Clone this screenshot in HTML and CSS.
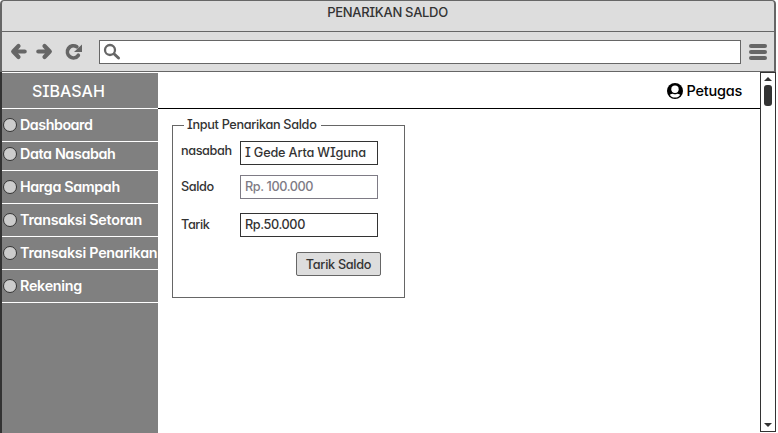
FILE: index.html
```html
<!DOCTYPE html>
<html lang="id">
<head>
<meta charset="utf-8">
<title>Penarikan Saldo</title>
<link rel="stylesheet" href="styles.css">
</head>
<body>
<div class="window">
  <header class="titlebar"><span class="title">PENARIKAN SALDO</span></header>
  <div class="toolbar">
    <svg class="nav-icons" width="97" height="40" viewBox="0 0 97 40" fill="none" stroke="#666" stroke-width="4.2" stroke-linecap="round" stroke-linejoin="round">
      <path d="M16.500 14L11.200 19.500L16.500 25M12 19.500H22.700"/>
      <path d="M42.500 14L47.800 19.500L42.500 25M36.300 19.500H47"/>
      <path d="M76.300 23.300A6 6 0 1 1 74.800 14.800" stroke-width="3.700"/>
      <path d="M80 12.500V20H72Z" fill="#666" stroke="none"/>
    </svg>
    <div class="address">
      <svg width="20" height="20" viewBox="0 0 20 20" fill="none" stroke="#666">
        <circle cx="7" cy="7" r="5" stroke-width="2.300"/>
        <path d="M11.200 11L15.500 15" stroke-width="3" stroke-linecap="round"/>
      </svg>
    </div>
    <div class="menu-icon"><i></i><i></i><i></i></div>
  </div>
  <div class="content">
    <aside class="sidebar">
      <div class="brand">SIBASAH</div>
      <nav>
        <a class="item"><i class="dot"></i><span class="tight">Dashboard</span></a>
        <a class="item short"><i class="dot"></i><span>Data Nasabah</span></a>
        <a class="item"><i class="dot"></i><span>Harga Sampah</span></a>
        <a class="item"><i class="dot"></i><span class="wide">Transaksi Setoran</span></a>
        <a class="item"><i class="dot"></i><span class="wide">Transaksi Penarikan</span></a>
        <a class="item"><i class="dot"></i><span class="wide">Rekening</span></a>
      </nav>
    </aside>
    <main class="page">
      <div class="userbar">
        <svg width="16" height="16" viewBox="0 0 16 16">
          <circle cx="8" cy="8" r="8" fill="#000"/>
          <circle cx="8" cy="6.300" r="3.700" fill="#fff"/>
          <path d="M2.800 11.700Q5 10.500 6 10.700Q8 11.700 10 10.700Q11 10.500 13.200 11.700Q11.500 14.600 8 14.600T2.800 11.700Z" fill="#fff"/>
        </svg>
        <span class="user">Petugas</span>
      </div>
      <section class="group">
        <h2 class="legend"><span>Input Penarikan Saldo</span></h2>
        <div class="row first"><label>nasabah</label><div class="field name">I Gede Arta WIguna</div></div>
        <div class="row second"><label>Saldo</label><div class="field disabled">Rp. 100.000</div></div>
        <div class="row third"><label>Tarik</label><div class="field">Rp.50.000</div></div>
        <button class="submit">Tarik Saldo</button>
      </section>
    </main>
    <div class="scrollbar">
      <svg width="10" height="6" viewBox="0 0 10 6"><path d="M1 5L5 1L9 5Z" fill="#333"/></svg>
      <div class="thumb"></div>
      <svg class="down" width="10" height="6" viewBox="0 0 10 6"><path d="M1 1L5 5L9 1Z" fill="#333"/></svg>
    </div>
  </div>
</div>
</body>
</html>
```
FILE: styles.css
```css
* { box-sizing: border-box; }
body {
  margin: 0;
  background: #fff;
  color: #333;
  font-family: Inter, "Liberation Sans", sans-serif;
  font-feature-settings: "cv11", "cv08", "calt" 0;
  font-size: 13px;
  font-weight: 500;
  white-space: nowrap;
  overflow: hidden;
}
.window { width: 776px; height: 433px; display: flex; flex-direction: column; }
.titlebar {
  height: 32px;
  background: #ddd;
  border: 1px solid #666;
  border-left-width: 2px;
  border-right-width: 2px;
  border-radius: 4px 4px 0 0;
  padding-right: 1px;
  text-align: center;
  line-height: 23px;
}
.title { letter-spacing: -0.3px; }
.toolbar {
  height: 40px;
  display: flex;
  align-items: center;
  background: #ddd;
  border: solid #666;
  border-width: 0 2px 1px;
}
.nav-icons { flex: none; margin-top: 1px; }
.address {
  width: 642px;
  height: 24px;
  background: #fff;
  border: 1px solid #666;
  padding: 2px 3px;
}
.menu-icon { display: flex; flex-direction: column; gap: 2px; margin-left: 8px; }
.menu-icon i { width: 18px; height: 4px; border-radius: 2px; background: #666; }
.content { flex: 1; display: flex; border-left: 2px solid #333; }
.sidebar {
  width: 156px;
  background: #808080;
  border-top: 1px solid #fff;
  color: #fff;
}
.brand {
  height: 36px;
  padding-left: 30px;
  border-bottom: 1px solid #fff;
  font-size: 16px;
  line-height: 37px;
}
.item {
  height: 33px;
  display: flex;
  align-items: center;
  gap: 3px;
  padding-left: 1px;
  border-bottom: 1px solid #fff;
  font-size: 14.3px;
  font-weight: 600;
  letter-spacing: -0.36px;
}
.item span { padding-bottom: 2px; }
.item.short { height: 29px; padding-bottom: 4px; }
.item.short span { padding-bottom: 1px; }
.item .tight { letter-spacing: -0.48px; }
.item .wide { letter-spacing: -0.25px; }
.dot {
  flex: none;
  width: 14px;
  height: 14px;
  border: 1px solid #333;
  border-radius: 50%;
  background: #ccc;
}
.page { flex: 1; }
.userbar {
  height: 37px;
  display: flex;
  justify-content: flex-end;
  align-items: center;
  gap: 4px;
  padding-right: 18px;
  border-bottom: 1px solid #000;
  color: #000;
  font-size: 14.5px;
  letter-spacing: -0.25px;
}
.userbar svg { margin-top: 1px; }
.group {
  width: 233px;
  height: 173px;
  margin: 16px 0 0 14px;
  border: 1px solid #666;
  font-size: 12.7px;
  letter-spacing: -0.4px;
}
.legend {
  margin: -9px 0 0 11px;
  height: 16px;
  font-size: inherit;
  font-weight: 500;
  letter-spacing: -0.32px;
  line-height: 16px;
}
.legend span { display: inline-block; background: #fff; padding: 0 4px 0 3px; }
.row { display: flex; margin-left: 8px; height: 24px; }
.row label { width: 59px; line-height: 23px; }
.first { margin-top: 8px; }
.first label { line-height: 20px; }
.second { margin-top: 10px; }
.third { margin-top: 14px; }
.field {
  width: 138px;
  height: 24px;
  border: 1px solid #333;
  padding-left: 4px;
  line-height: 21px;
}
.name { letter-spacing: -0.16px; line-height: 22px; }
.disabled { border-color: #7e7b85; color: #7e7b85; }
.submit {
  display: block;
  width: 85px;
  height: 24px;
  margin: 15px 0 0 123px;
  padding: 0;
  background: #ddd;
  border: 1px solid #666;
  border-radius: 2px;
  color: #333;
  font: inherit;
  font-feature-settings: inherit;
  letter-spacing: -0.3px;
  line-height: 21px;
}
.scrollbar {
  width: 16px;
  height: 360px;
  display: flex;
  flex-direction: column;
  align-items: center;
  padding-top: 3px;
  border: 1px solid #333;
}
.thumb { width: 8px; height: 21px; margin-top: 3px; border-radius: 3px; background: #333; }
.down { margin: auto 0 3px; }
```
